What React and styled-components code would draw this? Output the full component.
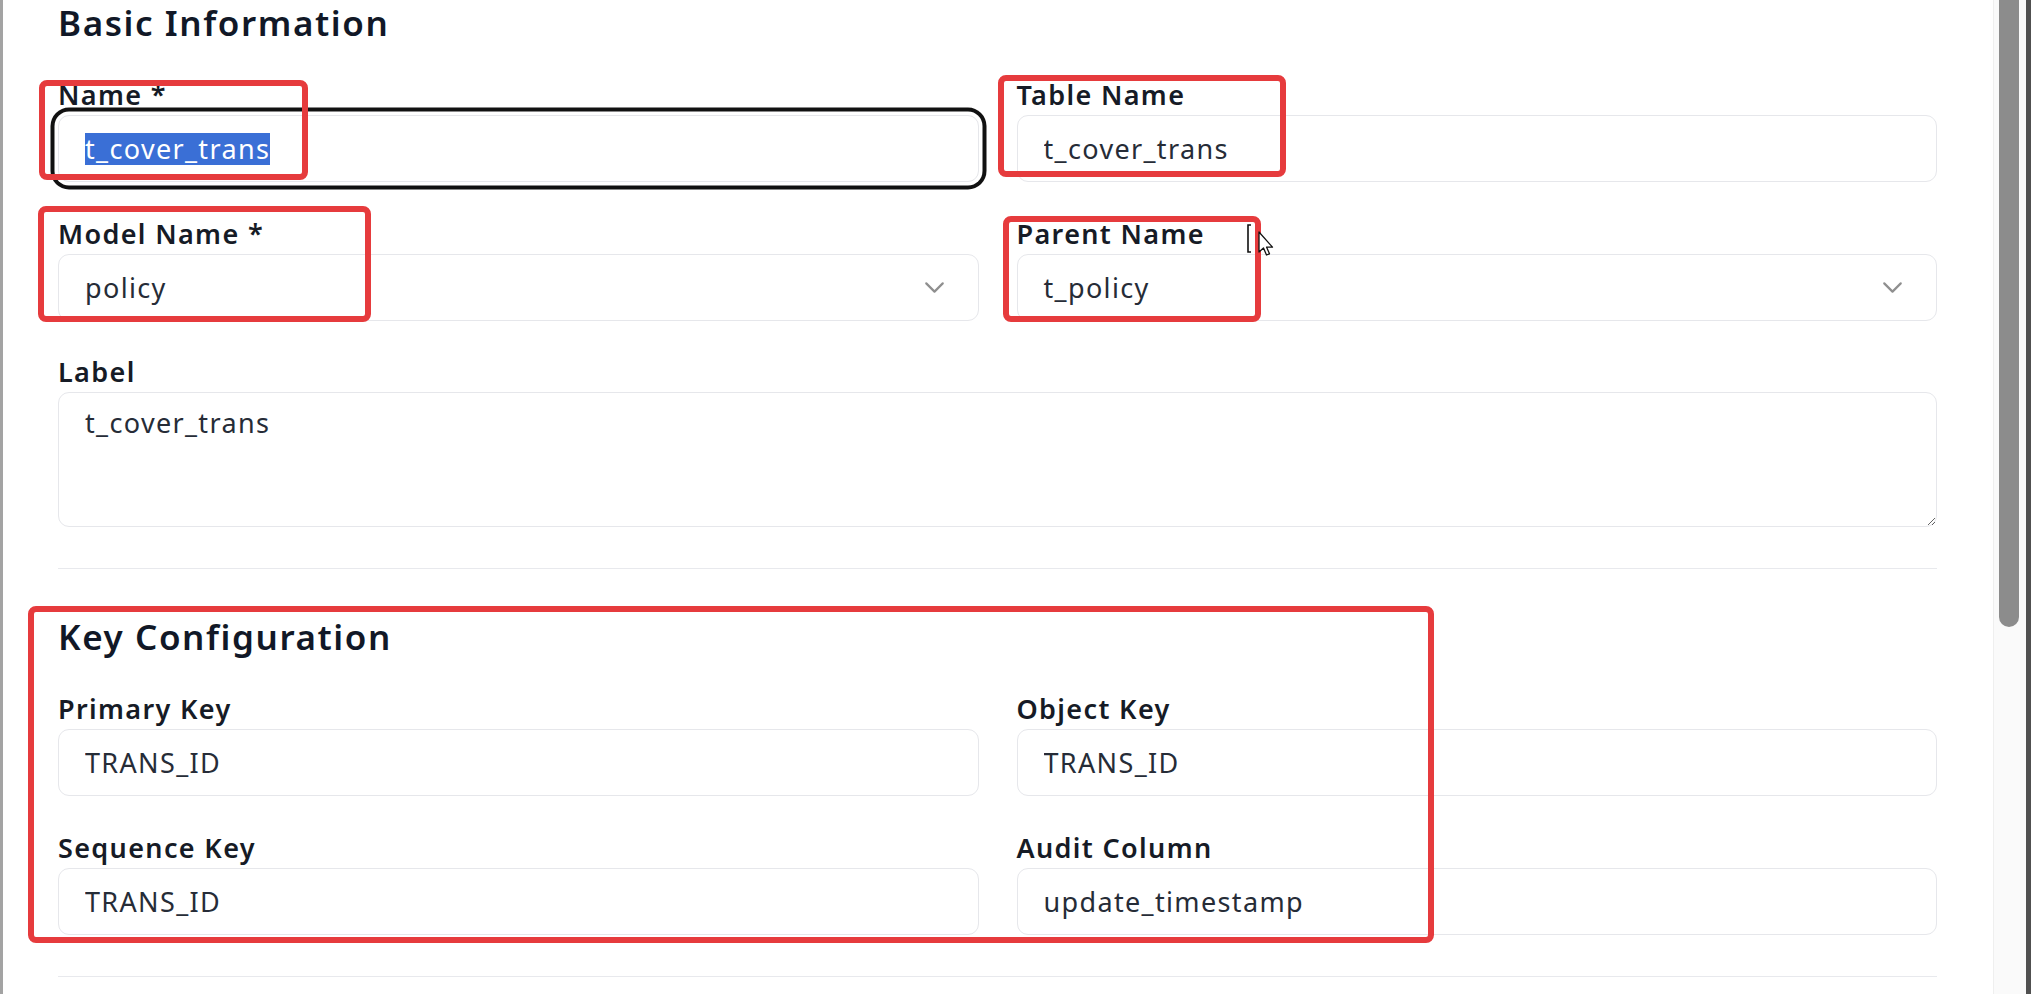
import React from 'react';
import styled, { createGlobalStyle } from 'styled-components';
import { ChevronDown } from 'lucide-react';

const GlobalStyle = createGlobalStyle`
  html, body {
    margin: 0;
    padding: 0;
    background: #ffffff;
  }
  body {
    font-family: "Noto Sans", "Open Sans", sans-serif;
    color: #1f2937;
  }
  * {
    box-sizing: border-box;
  }
`;

const Frame = styled.div`
  position: relative;
  display: flex;
  height: 994px;
  overflow: hidden;
  border-left: 3px solid #a3a3a3;
  background: #ffffff;
`;

const Content = styled.div`
  flex: 1;
  min-width: 0;
  padding: 5px 56px 0 55px;
`;

const Section = styled.section`
  padding-bottom: 41px;
  border-bottom: 1px solid #e8e9ed;

  & + & {
    padding-top: 50px;
  }
`;

const SectionTitle = styled.h2`
  margin: 0;
  font-size: 35px;
  line-height: 36px;
  font-weight: 600;
  letter-spacing: 0.045em;
  color: #111827;
`;

const FieldGrid = styled.div`
  display: grid;
  grid-template-columns: 1fr 1fr;
  column-gap: 38px;
  row-gap: 37.5px;
  margin-top: 40px;
`;

const Field = styled.div`
  display: flex;
  flex-direction: column;
  gap: 6px;
  grid-column: ${(p) => (p.$wide ? '1 / -1' : 'auto')};
`;

const Label = styled.label`
  font-size: 27px;
  line-height: 28px;
  font-weight: 600;
  letter-spacing: 0.05em;
  color: #161b26;
`;

const boxBase = `
  width: 100%;
  height: 67px;
  border: 1.5px solid #e6e7eb;
  border-radius: 11px;
  background: #ffffff;
  font-family: inherit;
  font-size: 27px;
  letter-spacing: 0.05em;
  color: #262c37;
  outline: none;
`;

const TextInput = styled.input`
  ${boxBase}
  padding: 0 26px;
`;

const FocusedBox = styled.div`
  ${boxBase}
  display: flex;
  align-items: center;
  padding: 0 26px;
  box-shadow: 0 0 0 3.5px #ffffff, 0 0 0 7.5px #111111;
`;

const Selected = styled.span`
  background: #3a6fd6;
  color: #ffffff;
  line-height: 32px;
`;

const SelectTrigger = styled.button`
  ${boxBase}
  display: flex;
  align-items: center;
  justify-content: space-between;
  padding: 0 27px 0 26px;
  text-align: left;
  cursor: pointer;

  svg {
    color: #8f8f8f;
    flex-shrink: 0;
  }
`;

const TextArea = styled.textarea`
  ${boxBase}
  height: 135px;
  padding: 16px 26px;
  line-height: 28px;
  resize: vertical;
`;

const Rail = styled.div`
  flex-shrink: 0;
  width: 38px;
  display: flex;
  padding-left: 5px;
  background: #fafafa;
  border-left: 1px solid #efefef;
  border-right: 5px solid #505050;
`;

const Thumb = styled.div`
  width: 20px;
  height: 627px;
  background: #8c8c8c;
  border-radius: 0 0 10px 10px;
`;

/* red review marks laid over the form */
const Markup = styled.div`
  position: absolute;
  left: ${(p) => p.$x}px;
  top: ${(p) => p.$y}px;
  width: ${(p) => p.$w}px;
  height: ${(p) => p.$h}px;
  border: 6px solid #e63b3d;
  border-radius: 8px;
  pointer-events: none;
`;

const Pointer = styled.svg`
  position: absolute;
  left: 1241px;
  top: 221px;
  pointer-events: none;
`;

const marks = [
  { x: 36, y: 80, w: 269, h: 100 },
  { x: 995, y: 75, w: 288, h: 102 },
  { x: 35, y: 206, w: 333, h: 116 },
  { x: 1000, y: 216, w: 258, h: 106 },
  { x: 25, y: 606, w: 1406, h: 337 },
];

const TextField = ({ label, value }) => (
  <Field>
    <Label>{label}</Label>
    <TextInput defaultValue={value} />
  </Field>
);

const SelectField = ({ label, value }) => (
  <Field>
    <Label>{label}</Label>
    <SelectTrigger type="button">
      <span>{value}</span>
      <ChevronDown size={33} strokeWidth={1.6} />
    </SelectTrigger>
  </Field>
);

export default function App() {
  return (
    <>
      <GlobalStyle />
      <Frame>
        <Content>
          <Section>
            <SectionTitle>Basic Information</SectionTitle>
            <FieldGrid>
              <Field>
                <Label>Name *</Label>
                <FocusedBox>
                  <Selected>t_cover_trans</Selected>
                </FocusedBox>
              </Field>
              <TextField label="Table Name" value="t_cover_trans" />
              <SelectField label="Model Name *" value="policy" />
              <SelectField label="Parent Name" value="t_policy" />
              <Field $wide>
                <Label>Label</Label>
                <TextArea defaultValue="t_cover_trans" />
              </Field>
            </FieldGrid>
          </Section>
          <Section>
            <SectionTitle>Key Configuration</SectionTitle>
            <FieldGrid>
              <TextField label="Primary Key" value="TRANS_ID" />
              <TextField label="Object Key" value="TRANS_ID" />
              <TextField label="Sequence Key" value="TRANS_ID" />
              <TextField label="Audit Column" value="update_timestamp" />
            </FieldGrid>
          </Section>
        </Content>
        <Rail>
          <Thumb />
        </Rail>
        {marks.map((m, i) => (
          <Markup key={i} $x={m.x} $y={m.y} $w={m.w} $h={m.h} />
        ))}
        <Pointer width="34" height="38" viewBox="0 0 34 38">
          <path d="M7 4 H4 V31 H7" fill="none" stroke="#111" strokeWidth="1.6" />
          <path
            d="M15 11 L15 31 L19.5 27 L22.5 34 L25.5 32.8 L22.6 26.2 L28.5 26.2 Z"
            fill="#fff"
            stroke="#111"
            strokeWidth="1.3"
            strokeLinejoin="round"
          />
        </Pointer>
      </Frame>
    </>
  );
}
